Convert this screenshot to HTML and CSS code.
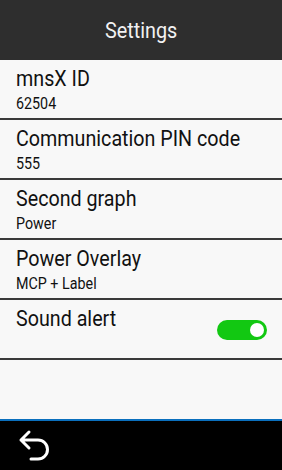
FILE: index.html
```html
<!DOCTYPE html>
<html>
<head>
<meta charset="utf-8">
<link rel="stylesheet" href="styles.css">
</head>
<body>
<div class="screen">
  <header class="topbar"><span class="title">Settings</span></header>
  <main class="list">
    <div class="row">
      <div class="row-text"><div class="label">mnsX ID</div><div class="value">62504</div></div>
    </div>
    <div class="row">
      <div class="row-text"><div class="label">Communication PIN code</div><div class="value">555</div></div>
    </div>
    <div class="row">
      <div class="row-text"><div class="label">Second graph</div><div class="value">Power</div></div>
    </div>
    <div class="row">
      <div class="row-text"><div class="label">Power Overlay</div><div class="value">MCP + Label</div></div>
    </div>
    <div class="row">
      <div class="row-text"><div class="label">Sound alert</div></div>
      <div class="toggle"><span class="knob"></span></div>
    </div>
  </main>
  <footer class="bottombar">
    <svg class="back" width="40" height="40" viewBox="0 0 40 40">
      <path d="M13 7 L5 15 L13 23 M5 15 H22 A9.5 9.5 0 0 1 22 34 H15" fill="none" stroke="#fff" stroke-width="3" stroke-linecap="round" stroke-linejoin="round"/>
    </svg>
  </footer>
</div>
</body>
</html>
```
FILE: styles.css
```css
html, body { margin: 0; padding: 0; }
body { width: 282px; height: 470px; overflow: hidden; font-family: Roboto, "Liberation Sans", sans-serif; background: #f8f8f8; }
.screen { display: flex; flex-direction: column; height: 470px; }
.topbar { height: 60px; background: #2e2e2e; display: flex; align-items: center; justify-content: center; }
.title { display: inline-block; color: #f2f2f2; font-size: 22.5px; line-height: 26px; margin-top: -1px; transform: scaleX(0.88); transform-origin: center; }
.list { flex: 1; background: #f8f8f8; border-bottom: 2px solid #0a6fbd; }
.row { height: 58px; border-bottom: 2px solid #3a3a3a; padding: 0 15px 0 16px; display: flex; align-items: flex-start; justify-content: space-between; color: #111; }
.row-text { padding-top: 6px; transform: scaleX(0.895); transform-origin: left top; white-space: nowrap; }
.label { font-size: 22px; line-height: 26px; }
.value { font-size: 17px; line-height: 20px; margin-top: 1px; transform: scaleX(0.94); transform-origin: left top; }
.toggle { width: 50px; height: 20px; border-radius: 10px; background: #12c812; margin-top: 20px; position: relative; }
.knob { position: absolute; right: 3px; top: 3px; width: 14px; height: 14px; border-radius: 50%; background: #fff; }
.bottombar { height: 49px; background: #000; padding-left: 16px; }
.back { display: block; margin-top: 4px; }
```
